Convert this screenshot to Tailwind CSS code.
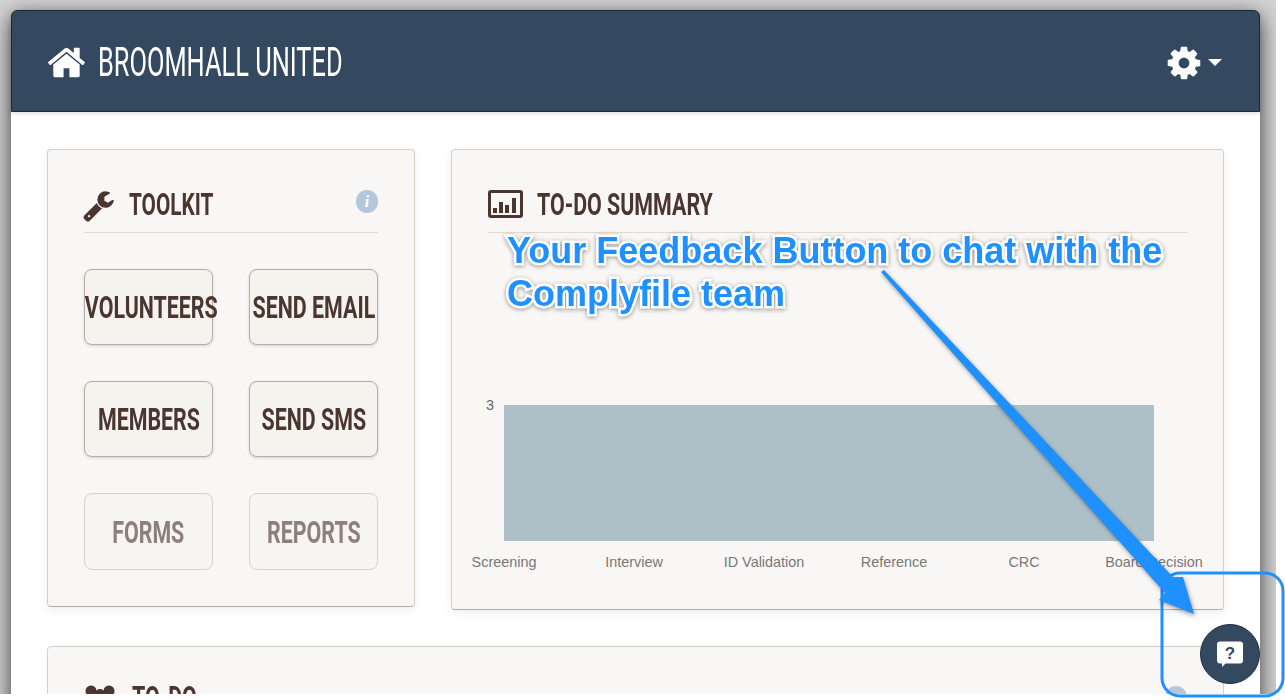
<!DOCTYPE html>
<html lang="en">
<head>
  <meta charset="UTF-8" />
  <title>Broomhall United</title>
  <script src="https://cdn.jsdelivr.net/npm/@tailwindcss/browser@4"></script>
</head>
<body class="bg-white">
<div class="relative w-[1285px] h-[700px] overflow-hidden bg-white font-['Liberation_Sans',sans-serif]">

  <!-- grey window backdrop -->
  <div class="w-[1276px] h-[694px] overflow-hidden bg-[#d4d4d4] pl-[11px] pt-[10px]">
    <div class="w-[1249px] h-[700px] bg-white rounded-t-md shadow-[0_6px_22px_rgba(0,0,0,0.75)]">

      <!-- navbar -->
      <nav class="h-[102px] bg-[#34485f] border border-[#1c2836] rounded-t-md flex items-center justify-between pl-[34px] pr-[37px] pt-[3px] shadow-[0_2px_4px_rgba(0,0,0,0.12)]">
        <div class="flex items-center">
          <svg class="w-[41px] h-[41px] text-white" viewBox="0 0 1792 1792" fill="currentColor"><path d="M1472 992v480q0 26-19 45t-45 19h-384v-384h-256v384h-384q-26 0-45-19t-19-45v-480q0-1 .5-3t.5-3l575-474 575 474q1 2 1 6zm223-69l-62 74q-8 9-21 11h-3q-13 0-21-7l-692-577-692 577q-12 8-24 7-13-2-21-11l-62-74q-8-10-7-23.5t11-21.5l719-599q32-26 76-26t76 26l244 204v-195q0-14 9-23t23-9h192q14 0 23 9t9 23v408l219 182q10 8 11 21.5t-7 23.5z"/></svg>
          <span class="ml-[11px] inline-block whitespace-nowrap origin-left scale-x-[0.635] font-['Roboto',sans-serif] text-[40px] leading-none text-white">BROOMHALL UNITED</span>
        </div>
        <div class="flex items-center">
          <svg class="w-[38px] h-[38px] text-white" viewBox="0 0 1792 1792" fill="currentColor"><path d="M1152 896q0-106-75-181t-181-75-181 75-75 181 75 181 181 75 181-75 75-181zm512-109v222q0 12-8 23t-20 13l-185 28q-19 54-39 91 35 50 107 138 10 12 10 25t-9 23q-27 37-99 108t-94 71q-12 0-26-9l-138-108q-44 23-91 38-16 136-29 186-7 28-36 28h-222q-14 0-24.5-8.5t-11.5-21.5l-28-184q-49-16-90-37l-141 107q-10 9-25 9-14 0-25-11-126-114-165-168-7-10-7-23 0-12 8-23 15-21 51-66.5t54-70.5q-27-50-41-99l-183-27q-13-2-21-12.5t-8-23.5v-222q0-12 8-23t19-13l186-28q14-46 39-92-40-57-107-138-10-12-10-24 0-10 9-23 26-36 98.5-107.5t94.5-71.5q13 0 26 10l138 107q44-23 91-38 16-136 29-186 7-28 36-28h222q14 0 24.5 8.5t11.5 21.5l28 184q49 16 90 37l142-107q9-9 24-9 13 0 25 10 129 119 165 170 7 8 7 22 0 12-8 23-15 21-51 66.5t-54 70.5q26 50 41 98l183 28q13 2 21 12.5t8 23.5z"/></svg>
          <span class="ml-[5px] w-0 h-0 border-l-[7px] border-r-[7px] border-t-[7px] border-l-transparent border-r-transparent border-t-white"></span>
        </div>
      </nav>

      <div class="px-[36px] pt-[37px]">
        <div class="flex gap-[36px] items-start">

          <!-- toolkit -->
          <section class="w-[368px] h-[458px] bg-[#f9f7f5] border border-[#d5d0c7] border-b-[#b5aea5] rounded-[4px] shadow-[0_3px_10px_rgba(0,0,0,0.07)] px-[36px] pt-[32px]">
            <div class="h-[51px] border-b border-[#e2dccf] flex items-start justify-between">
              <div class="flex items-center h-[44px]">
                <svg class="w-[33px] h-[33px] text-[#4a3530] -ml-[2px] mt-[2px]" viewBox="0 0 1792 1792" fill="currentColor"><path d="M448 1472q0-26-19-45t-45-19-45 19-19 45 19 45 45 19 45-19 19-45zm644-420l-682 682q-37 37-90 37-52 0-91-37l-106-108q-38-36-38-90 0-53 38-91l681-681q39 98 114.5 173.5t173.5 114.5zm634-435q0 39-23 106-47 134-164.5 217.5t-258.5 83.5q-185 0-316.5-131.5t-131.5-316.5 131.5-316.5 316.5-131.5q58 0 121.5 16.5t107.5 46.5q16 11 16 28t-16 28l-293 169v224l193 107q5-3 79-48.5t135.5-81 70.5-35.5q15 0 23.5 10t8.5 25z"/></svg>
                <span class="ml-[14px] inline-block whitespace-nowrap origin-left scale-x-[0.67] font-['Roboto',sans-serif] font-bold text-[31px] leading-none text-[#4a3530]">TOOLKIT</span>
              </div>
              <span class="mt-[8px] w-[22px] h-[23px] rounded-full bg-[#b4c7dd] flex items-center justify-center font-['Liberation_Serif',serif] italic font-bold text-[16px] leading-none text-white">i</span>
            </div>

            <div class="mt-[36px] grid grid-cols-[129px_129px] gap-x-[36px] gap-y-[36px]">
              <button class="h-[76px] bg-[#f5f3ee] border border-[#b3aea8] rounded-[8px] shadow-[0_1px_3px_rgba(0,0,0,0.15)] flex items-center justify-center"><span class="ml-[5px] inline-block whitespace-nowrap scale-x-[0.69] font-['Roboto',sans-serif] font-bold text-[31px] leading-none text-[#4a3530]">VOLUNTEERS</span></button>
              <button class="h-[76px] bg-[#f5f3ee] border border-[#b3aea8] rounded-[8px] shadow-[0_1px_3px_rgba(0,0,0,0.15)] flex items-center justify-center"><span class="inline-block whitespace-nowrap scale-x-[0.69] font-['Roboto',sans-serif] font-bold text-[31px] leading-none text-[#4a3530]">SEND EMAIL</span></button>
              <button class="h-[76px] bg-[#f5f3ee] border border-[#b3aea8] rounded-[8px] shadow-[0_1px_3px_rgba(0,0,0,0.15)] flex items-center justify-center"><span class="inline-block whitespace-nowrap scale-x-[0.69] font-['Roboto',sans-serif] font-bold text-[31px] leading-none text-[#4a3530]">MEMBERS</span></button>
              <button class="h-[76px] bg-[#f5f3ee] border border-[#b3aea8] rounded-[8px] shadow-[0_1px_3px_rgba(0,0,0,0.15)] flex items-center justify-center"><span class="inline-block whitespace-nowrap scale-x-[0.69] font-['Roboto',sans-serif] font-bold text-[31px] leading-none text-[#4a3530]">SEND SMS</span></button>
              <button class="h-[77px] pt-[2px] bg-[#f6f5f1] border border-[#d6d3ce] rounded-[8px] flex items-center justify-center"><span class="inline-block whitespace-nowrap scale-x-[0.69] font-['Roboto',sans-serif] font-bold text-[31px] leading-none text-[#8c7f7c]">FORMS</span></button>
              <button class="h-[77px] pt-[2px] bg-[#f6f5f1] border border-[#d6d3ce] rounded-[8px] flex items-center justify-center"><span class="inline-block whitespace-nowrap scale-x-[0.69] font-['Roboto',sans-serif] font-bold text-[31px] leading-none text-[#8c7f7c]">REPORTS</span></button>
            </div>
          </section>

          <!-- summary -->
          <section class="w-[773px] h-[461px] bg-[#f9f7f5] border border-[#d5d0c7] border-b-[#b5aea5] rounded-[4px] shadow-[0_3px_10px_rgba(0,0,0,0.07)] pt-[32px]">
            <div class="mx-[36px] h-[51px] border-b border-[#e2dccf]">
              <div class="flex items-center h-[44px]">
                <svg class="w-[35px] h-[28px] text-[#4a3530]" viewBox="0 0 35 28" fill="currentColor"><path d="M3 0h29a3 3 0 0 1 3 3v22a3 3 0 0 1-3 3H3a3 3 0 0 1-3-3V3a3 3 0 0 1 3-3zm0 3v22h29V3z" fill-rule="evenodd"/><rect x="5" y="18" width="4" height="5"/><rect x="11" y="12" width="4" height="11"/><rect x="17" y="15" width="4" height="8"/><rect x="24" y="8" width="4" height="15"/></svg>
                <span class="ml-[14px] inline-block whitespace-nowrap origin-left scale-x-[0.69] font-['Roboto',sans-serif] font-bold text-[31px] leading-none text-[#4a3530]">TO-DO SUMMARY</span>
              </div>
            </div>

            <div class="mt-[172px] flex items-start">
              <span class="-mt-[7px] w-[42px] text-right text-[14.4px] leading-none text-[#666]">3</span>
              <div class="ml-[10px] w-[650px] h-[136px] bg-[#adc0c8]"></div>
            </div>
            <div class="mt-[13px] -ml-[13px] w-[780px] grid grid-cols-6 text-center text-[14.4px] leading-[16px] text-[#777]">
              <span>Screening</span>
              <span>Interview</span>
              <span>ID Validation</span>
              <span>Reference</span>
              <span>CRC</span>
              <span>Board Decision</span>
            </div>
          </section>
        </div>

        <!-- to-do list, mostly below the fold -->
        <section class="mt-[36px] w-[1177px] h-[200px] bg-[#f9f7f5] border border-[#d5d0c7] rounded-[4px] px-[36px] pt-[28px]">
          <div class="flex items-center justify-between h-[44px]">
            <div class="flex items-center">
              <svg class="w-[32px] h-[24px] text-[#4a3530]" viewBox="0 0 32 24" fill="currentColor"><circle cx="7" cy="6" r="5.5"/><circle cx="25" cy="6" r="5.5"/><circle cx="16" cy="9" r="5"/><rect x="2" y="11" width="28" height="13" rx="4"/></svg>
              <span class="ml-[16px] inline-block whitespace-nowrap origin-left scale-x-[0.69] font-['Roboto',sans-serif] font-bold text-[31px] leading-none text-[#4a3530]">TO-DO</span>
            </div>
            <span class="w-[22px] h-[22px] rounded-full bg-[#b4c7dd]"></span>
          </div>
        </section>
      </div>
    </div>
  </div>

  <!-- feedback button -->
  <button class="absolute left-[1200px] top-[624px] w-[60px] h-[60px] rounded-full bg-[#34485f] border border-[#1f2d3d] flex items-center justify-center">
    <svg class="w-[28px] h-[28px]" viewBox="0 0 28 28"><path d="M4 1.500h20a3 3 0 0 1 3 3v16a3 3 0 0 1-3 3H9.500l-3.500 3.500v-3.500H4a3 3 0 0 1-3-3v-16a3 3 0 0 1 3-3z" fill="#fff"/><text x="14" y="18.500" text-anchor="middle" font-family="Liberation Sans" font-weight="700" font-size="17" fill="#34485f">?</text></svg>
  </button>

  <!-- screenshot annotation -->
  <svg class="absolute left-0 top-0 w-[1285px] h-[700px] pointer-events-none" viewBox="0 0 1285 700">
    <rect x="1162" y="573" width="121" height="123" rx="18" fill="none" stroke="#1e90ff" stroke-width="3"/>
    <path d="M881 272 L884 270 L1173 577 L1183 577 L1194 614 L1159 600 L1165 593 Z" fill="#1e90ff" style="filter:drop-shadow(1px 2px 2px rgba(0,0,0,0.4))"/>
  </svg>
  <p class="absolute left-[507px] top-[229px] w-[700px] text-[36px] leading-[43px] font-bold text-[#1e90ff] [-webkit-text-stroke:5px_#fff] [paint-order:stroke_fill] drop-shadow-[0_1px_2px_rgba(0,0,0,0.4)]">Your Feedback Button to chat with the Complyfile team</p>
</div>
</body>
</html>
